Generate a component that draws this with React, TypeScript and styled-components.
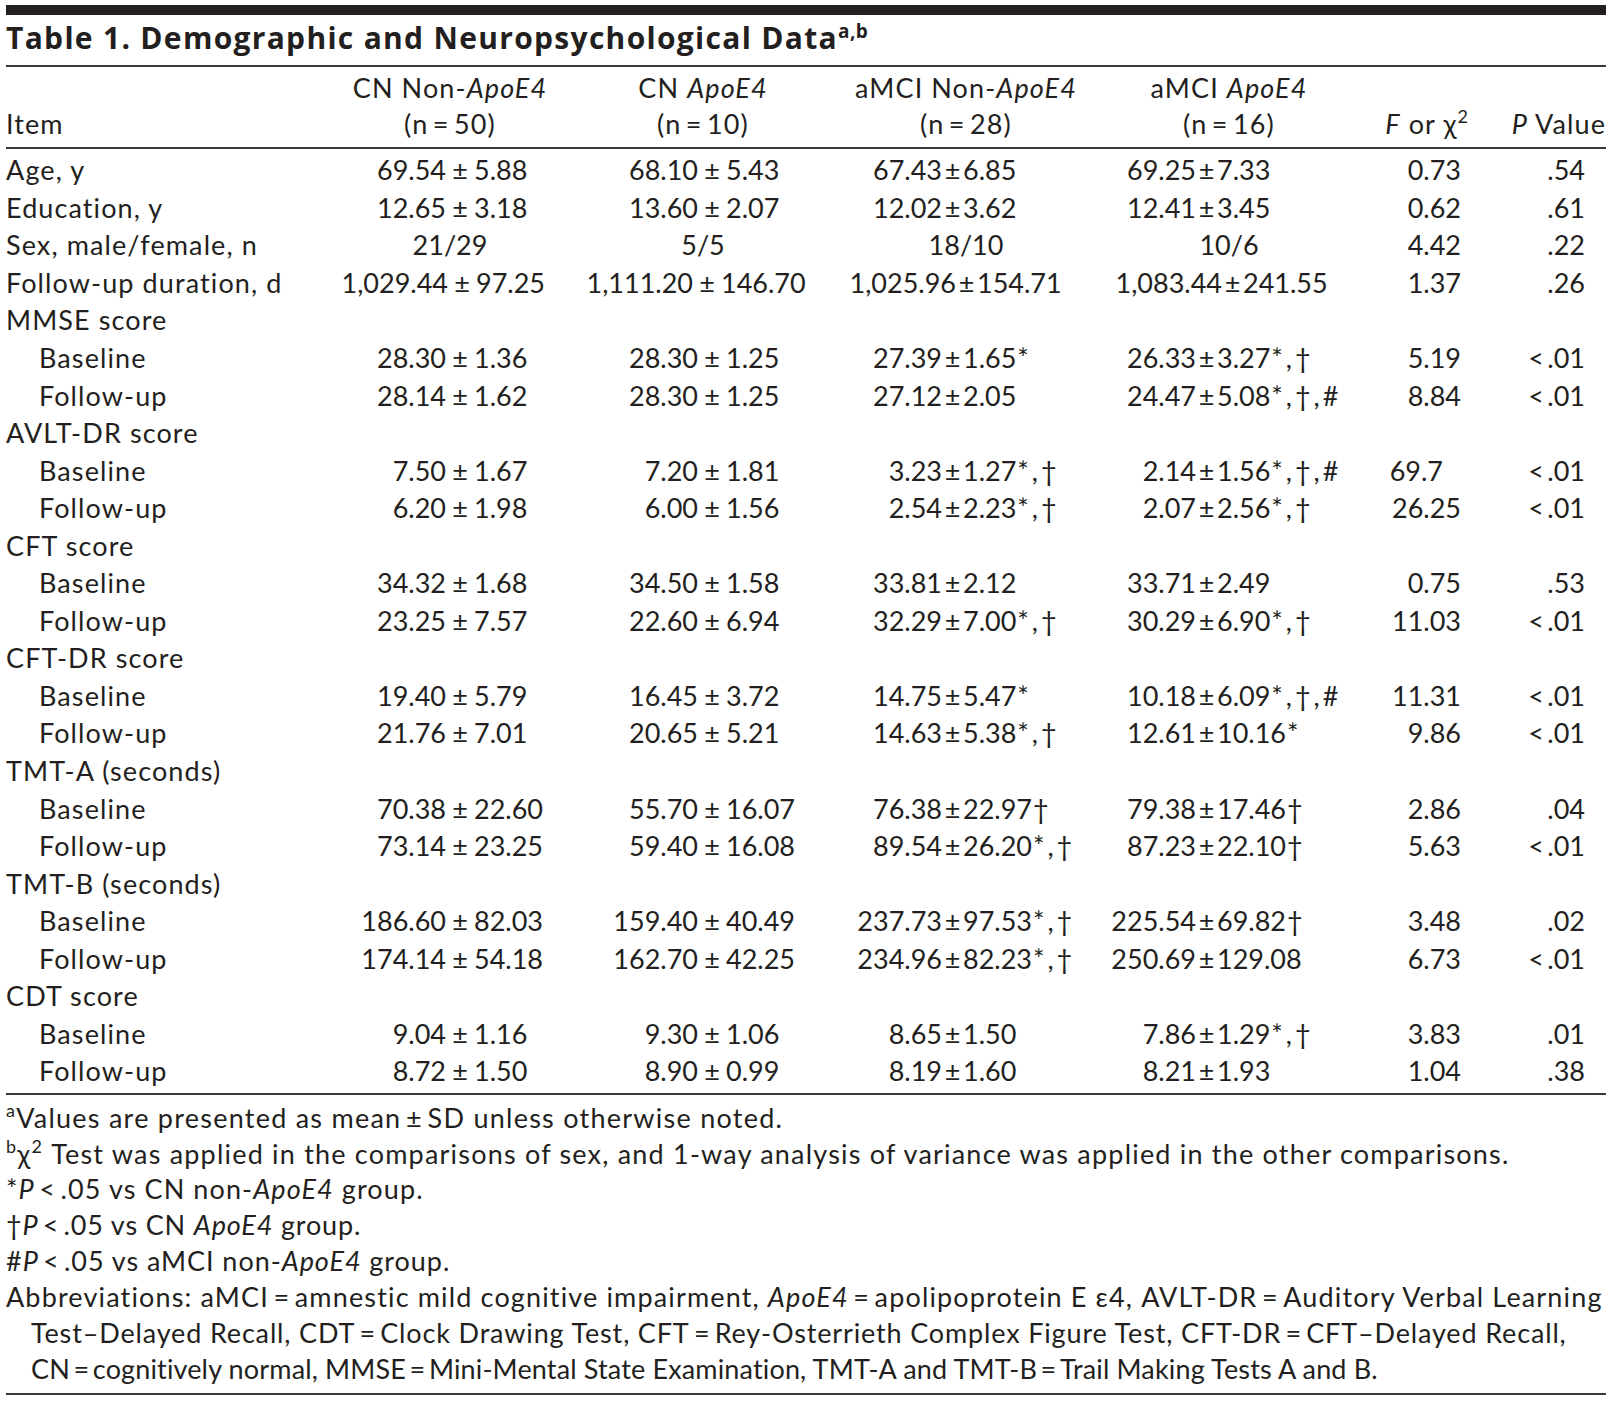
import React from "react";
import styled, { createGlobalStyle } from "styled-components";

const INK = "#231f20";
const FONT = `"Lato", "Liberation Sans", sans-serif`;
const COLS = "324px 240px 266px 260px 266px 118px 126px";

const GlobalStyle = createGlobalStyle`
    body {
        margin: 0;
        background: #fff;
        color: ${INK};
        font-family: ${FONT};
    }
`;

const Page = styled.div`
    width: 1600px;
    padding: 5px 0 0 6px;
`;

const ThickRule = styled.div`
    height: 10px;
    background: ${INK};
`;

const Rule = styled.div`
    height: 2px;
    background: #3a3a3a;
`;

const Title = styled.h1`
    margin: 0;
    height: 50px;
    line-height: 46px;
    font-family: "Open Sans", ${FONT};
    font-size: 30px;
    font-weight: 700;
    letter-spacing: 1.3px;
    white-space: nowrap;

    sup {
        font-size: 19px;
        letter-spacing: 0.5px;
        vertical-align: 11px;
        line-height: 0;
    }
`;

const Head = styled.div`
    display: grid;
    grid-template-columns: ${COLS};
    padding: 3px 0 5px;
    font-size: 27px;
    line-height: 36px;
`;

const HeadCell = styled.div<{ $align?: "left" | "center" | "right"; $pad?: number }>`
    display: flex;
    flex-direction: column;
    justify-content: flex-end;
    text-align: ${(p) => p.$align || "center"};
    padding-right: ${(p) => p.$pad || 0}px;
    letter-spacing: 1.1px;
    white-space: nowrap;

    sup {
        font-size: 18px;
        vertical-align: 11px;
        line-height: 0;
    }
`;

const Body = styled.div`
    padding: 2px 0 3px;
`;

const Row = styled.div`
    display: grid;
    grid-template-columns: ${COLS};
    height: 37.55px;
    align-items: center;
    font-size: 27px;
    line-height: 37px;
    white-space: nowrap;
`;

const Label = styled.div<{ $sub?: boolean }>`
    padding-left: ${(p) => (p.$sub ? 33 : 0)}px;
    letter-spacing: 1.1px;
`;

const Centered = styled.div`
    text-align: center;
`;

const Value = styled.div<{ $lead: number; $narrow?: boolean }>`
    display: flex;

    .mean {
        width: ${(p) => p.$lead}px;
        text-align: right;
    }

    .pm {
        width: ${(p) => (p.$narrow ? 21 : 28)}px;
        text-align: center;
    }

    .marks {
        padding-left: 1px;
        letter-spacing: 3px;
    }
`;

const Num = styled.div<{ $pad: number }>`
    text-align: right;
    padding-right: ${(p) => p.$pad}px;
`;

const Notes = styled.div`
    padding: 5px 0 6px;
    font-size: 27px;
    line-height: 35.9px;

    sup {
        font-size: 18px;
        vertical-align: 11px;
        line-height: 0;
    }
`;

const Note = styled.div<{ $track?: number; $hang?: boolean }>`
    white-space: nowrap;
    letter-spacing: ${(p) => (p.$track ?? 1.15)}px;
    padding-left: ${(p) => (p.$hang ? 25 : 0)}px;
`;

type DataRow = {
    label: string;
    sub?: boolean;
    cells?: string[];
    leads?: number[];
    f?: string;
    fShift?: number;
    p?: string;
};

const rows: DataRow[] = [
    { label: "Age, y", cells: ["69.54±5.88", "68.10±5.43", "67.43±6.85", "69.25±7.33"], f: "0.73", p: ".54" },
    { label: "Education, y", cells: ["12.65±3.18", "13.60±2.07", "12.02±3.62", "12.41±3.45"], f: "0.62", p: ".61" },
    { label: "Sex, male/female, n", cells: ["21/29", "5/5", "18/10", "10/6"], f: "4.42", p: ".22" },
    {
        label: "Follow-up duration, d",
        cells: ["1,029.44±97.25", "1,111.20±146.70", "1,025.96±154.71", "1,083.44±241.55"],
        leads: [118, 123, 120, 126],
        f: "1.37",
        p: ".26",
    },
    { label: "MMSE score" },
    { label: "Baseline", sub: true, cells: ["28.30±1.36", "28.30±1.25", "27.39±1.65*", "26.33±3.27*,†"], f: "5.19", p: "<.01" },
    { label: "Follow-up", sub: true, cells: ["28.14±1.62", "28.30±1.25", "27.12±2.05", "24.47±5.08*,†,#"], f: "8.84", p: "<.01" },
    { label: "AVLT-DR score" },
    { label: "Baseline", sub: true, cells: ["7.50±1.67", "7.20±1.81", "3.23±1.27*,†", "2.14±1.56*,†,#"], f: "69.7", fShift: 18, p: "<.01" },
    { label: "Follow-up", sub: true, cells: ["6.20±1.98", "6.00±1.56", "2.54±2.23*,†", "2.07±2.56*,†"], f: "26.25", p: "<.01" },
    { label: "CFT score" },
    { label: "Baseline", sub: true, cells: ["34.32±1.68", "34.50±1.58", "33.81±2.12", "33.71±2.49"], f: "0.75", p: ".53" },
    { label: "Follow-up", sub: true, cells: ["23.25±7.57", "22.60±6.94", "32.29±7.00*,†", "30.29±6.90*,†"], f: "11.03", p: "<.01" },
    { label: "CFT-DR score" },
    { label: "Baseline", sub: true, cells: ["19.40±5.79", "16.45±3.72", "14.75±5.47*", "10.18±6.09*,†,#"], f: "11.31", p: "<.01" },
    { label: "Follow-up", sub: true, cells: ["21.76±7.01", "20.65±5.21", "14.63±5.38*,†", "12.61±10.16*"], f: "9.86", p: "<.01" },
    { label: "TMT-A (seconds)" },
    { label: "Baseline", sub: true, cells: ["70.38±22.60", "55.70±16.07", "76.38±22.97†", "79.38±17.46†"], f: "2.86", p: ".04" },
    { label: "Follow-up", sub: true, cells: ["73.14±23.25", "59.40±16.08", "89.54±26.20*,†", "87.23±22.10†"], f: "5.63", p: "<.01" },
    { label: "TMT-B (seconds)" },
    { label: "Baseline", sub: true, cells: ["186.60±82.03", "159.40±40.49", "237.73±97.53*,†", "225.54±69.82†"], f: "3.48", p: ".02" },
    { label: "Follow-up", sub: true, cells: ["174.14±54.18", "162.70±42.25", "234.96±82.23*,†", "250.69±129.08"], f: "6.73", p: "<.01" },
    { label: "CDT score" },
    { label: "Baseline", sub: true, cells: ["9.04±1.16", "9.30±1.06", "8.65±1.50", "7.86±1.29*,†"], f: "3.83", p: ".01" },
    { label: "Follow-up", sub: true, cells: ["8.72±1.50", "8.90±0.99", "8.19±1.60", "8.21±1.93"], f: "1.04", p: ".38" },
];

// width of the part before the ± in each group column
const leads = [116, 128, 106, 100];

const Cell: React.FC<{ text: string; lead: number; narrow: boolean }> = ({ text, lead, narrow }) => {
    if (!text.includes("±")) return <Centered>{text}</Centered>;
    const [mean, rest] = text.split("±");
    const m = rest.match(/^([\d.,]+)(.*)$/);
    const sd = m ? m[1] : rest;
    const marks = m ? m[2] : "";
    return (
        <Value $lead={lead} $narrow={narrow}>
            <span className="mean">{mean}</span>
            <span className="pm">±</span>
            <span>{sd}</span>
            {marks && <span className="marks">{marks}</span>}
        </Value>
    );
};

const pText = (p: string) => (p.startsWith("<") ? "<\u2009" + p.slice(1) : p);

const GroupHead: React.FC<{ prefix: string; n: number }> = ({ prefix, n }) => (
    <HeadCell>
        <span>
            {prefix}
            <i>ApoE4</i>
        </span>
        <span>(n{"\u2009=\u2009"}{n})</span>
    </HeadCell>
);

const eq = "\u2009=\u2009";
const lt = "\u2009<\u2009";

export default function App() {
    return (
        <Page>
            <GlobalStyle />
            <ThickRule />
            <Title>
                Table 1. Demographic and Neuropsychological Data<sup>a,b</sup>
            </Title>
            <Rule />
            <Head>
                <HeadCell $align="left">Item</HeadCell>
                <GroupHead prefix="CN Non-" n={50} />
                <GroupHead prefix="CN " n={10} />
                <GroupHead prefix="aMCI Non-" n={28} />
                <GroupHead prefix="aMCI " n={16} />
                <HeadCell $align="right" $pad={11}>
                    <span>
                        <i>F</i> or χ<sup>2</sup>
                    </span>
                </HeadCell>
                <HeadCell $align="right">
                    <span>
                        <i>P</i> Value
                    </span>
                </HeadCell>
            </Head>
            <Rule />
            <Body>
                {rows.map((r, i) => (
                    <Row key={i}>
                        <Label $sub={r.sub}>{r.label}</Label>
                        {r.cells
                            ? r.cells.map((c, j) => <Cell key={j} text={c} lead={(r.leads || leads)[j]} narrow={j > 1} />)
                            : [0, 1, 2, 3].map((j) => <div key={j} />)}
                        <Num $pad={19 + (r.fShift || 0)}>{r.f || ""}</Num>
                        <Num $pad={21}>{r.p ? pText(r.p) : ""}</Num>
                    </Row>
                ))}
            </Body>
            <Rule />
            <Notes>
                <Note $track={1.25}>
                    <sup>a</sup>Values are presented as mean{"\u2009±\u2009"}SD unless otherwise noted.
                </Note>
                <Note $track={1.2}>
                    <sup>b</sup>χ<sup>2</sup> Test was applied in the comparisons of sex, and 1-way analysis of variance was applied in the other comparisons.
                </Note>
                <Note $track={1.1}>
                    *<i>P</i>
                    {lt}.05 vs CN non-<i>ApoE4</i> group.
                </Note>
                <Note $track={0.85}>
                    †<i>P</i>
                    {lt}.05 vs CN <i>ApoE4</i> group.
                </Note>
                <Note $track={0.95}>
                    #<i>P</i>
                    {lt}.05 vs aMCI non-<i>ApoE4</i> group.
                </Note>
                <Note $track={1.15}>
                    Abbreviations: aMCI{eq}amnestic mild cognitive impairment, <i>ApoE4</i>
                    {eq}apolipoprotein E ε4, AVLT-DR{eq}Auditory Verbal Learning
                </Note>
                <Note $hang $track={0.85}>
                    Test–Delayed Recall, CDT{eq}Clock Drawing Test, CFT{eq}Rey-Osterrieth Complex Figure Test, CFT-DR{eq}CFT–Delayed Recall,
                </Note>
                <Note $hang $track={0.15}>
                    CN{eq}cognitively normal, MMSE{eq}Mini-Mental State Examination, TMT-A and TMT-B{eq}Trail Making Tests A and B.
                </Note>
            </Notes>
            <Rule />
        </Page>
    );
}
